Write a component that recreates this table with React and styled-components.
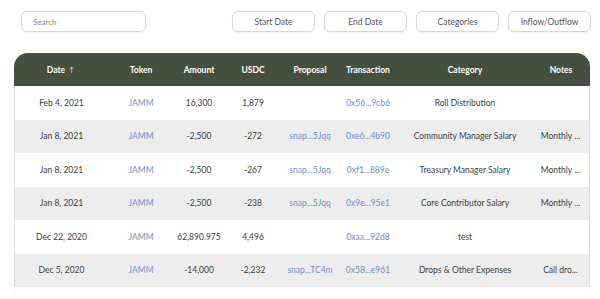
import React from 'react'
import styled, { createGlobalStyle } from 'styled-components'

const GlobalStyle = createGlobalStyle`
  body {
    margin: 0;
    background: #ffffff;
    font-family: Lato, "Open Sans", sans-serif;
  }
`

const columns = [
  { key: 'date', label: 'Date', width: 94 },
  { key: 'token', label: 'Token', width: 66 },
  { key: 'amount', label: 'Amount', width: 50 },
  { key: 'usdc', label: 'USDC', width: 58 },
  { key: 'proposal', label: 'Proposal', width: 56 },
  { key: 'tx', label: 'Transaction', width: 60 },
  { key: 'category', label: 'Category', width: 134 },
  { key: 'notes', label: 'Notes', width: 58 },
]

const rows = [
  { date: 'Feb 4, 2021', amount: '16,300', usdc: '1,879', proposal: '', tx: '0x56...9cb6', category: 'Roll Distribution', notes: '' },
  { date: 'Jan 8, 2021', amount: '-2,500', usdc: '-272', proposal: 'snap...5Jqq', tx: '0xe6...4b90', category: 'Community Manager Salary', notes: 'Monthly ...' },
  { date: 'Jan 8, 2021', amount: '-2,500', usdc: '-267', proposal: 'snap...5Jqq', tx: '0xf1...889e', category: 'Treasury Manager Salary', notes: 'Monthly ...' },
  { date: 'Jan 8, 2021', amount: '-2,500', usdc: '-238', proposal: 'snap...5Jqq', tx: '0x9e...95e1', category: 'Core Contributor Salary', notes: 'Monthly ...' },
  { date: 'Dec 22, 2020', amount: '62,890.975', usdc: '4,496', proposal: '', tx: '0xaa...92d8', category: 'test', notes: '' },
  { date: 'Dec 5, 2020', amount: '-14,000', usdc: '-2,232', proposal: 'snap...TC4m', tx: '0x58...e961', category: 'Drops & Other Expenses', notes: 'Call dro...' },
  { date: 'Nov 30, 2020', amount: '-5,000', usdc: '-812', proposal: 'snap...8Kpw', tx: '0x3d...a7c2', category: 'Contributor Rewards', notes: 'Paid to ...', faded: true },
]

const filters = ['Start Date', 'End Date', 'Categories', 'Inflow/Outflow']

export default function App() {
  return (
    <Page>
      <GlobalStyle />
      <Toolbar>
        <SearchInput placeholder="Search" />
        <FilterGroup>
          {filters.map((f) => (
            <FilterButton key={f}>{f}</FilterButton>
          ))}
        </FilterGroup>
      </Toolbar>
      <Table>
        <colgroup>
          {columns.map((c) => (
            <col key={c.key} style={{ width: c.width }} />
          ))}
        </colgroup>
        <thead>
          <tr>
            {columns.map((c) => (
              <HeadCell key={c.key}>
                {c.label}
                {c.key === 'date' && <SortArrow>↑</SortArrow>}
              </HeadCell>
            ))}
          </tr>
        </thead>
        <tbody>
          {rows.map((r, i) => (
            <Row key={i} $striped={i % 2 === 1} $faded={r.faded}>
              <Cell>{r.date}</Cell>
              <Cell $link>JAMM</Cell>
              <Cell>{r.amount}</Cell>
              <Cell>{r.usdc}</Cell>
              <Cell $link>{r.proposal}</Cell>
              <Cell $link>{r.tx}</Cell>
              <Cell>{r.category}</Cell>
              <Cell>{r.notes}</Cell>
            </Row>
          ))}
        </tbody>
      </Table>
    </Page>
  )
}

const Page = styled.div`
  width: 600px;
  height: 299px;
  overflow: hidden;
  padding: 11px 9px 0 14px;
  box-sizing: border-box;
`

const Toolbar = styled.div`
  display: flex;
  justify-content: space-between;
  align-items: center;
  padding-left: 7px;
  margin-bottom: 21px;
`

const SearchInput = styled.input`
  width: 125px;
  height: 21px;
  box-sizing: border-box;
  border: 1px solid #d6d6d6;
  border-radius: 6px;
  padding: 0 11px;
  font-family: Lato, sans-serif;
  font-size: 8px;
  color: #444;
  outline: none;
  box-shadow: 0 1px 2px rgba(0, 0, 0, 0.06);

  &::placeholder {
    color: #8a8a8a;
  }
`

const FilterGroup = styled.div`
  display: flex;
  gap: 9px;
`

const FilterButton = styled.button`
  width: 83px;
  height: 21px;
  box-sizing: border-box;
  background: #ffffff;
  border: 1px solid #d6d6d6;
  border-radius: 6px;
  font-family: Lato, sans-serif;
  font-size: 8.5px;
  color: #555;
  box-shadow: 0 1px 2px rgba(0, 0, 0, 0.06);
  padding: 0;
`

const Table = styled.table`
  width: 576px;
  table-layout: fixed;
  border-collapse: separate;
  border-spacing: 0;
  font-size: 8.5px;

  tbody td:first-child {
    border-left: 1px solid #dedede;
  }
  tbody td:last-child {
    border-right: 1px solid #dedede;
  }
`

const HeadCell = styled.th`
  height: 33px;
  padding: 0;
  background: #444f3e;
  color: #ffffff;
  font-weight: 700;
  font-size: 8.5px;
  text-align: center;

  &:first-child {
    border-top-left-radius: 14px;
  }
  &:last-child {
    border-top-right-radius: 14px;
  }
`

const SortArrow = styled.span`
  color: #c9cdc5;
  font-family: "DejaVu Sans", sans-serif;
  font-weight: 400;
  margin-left: 3px;
`

const Row = styled.tr`
  background: ${(p) => (p.$striped ? '#ededed' : '#ffffff')};
  opacity: ${(p) => (p.$faded ? 0.12 : 1)};
`

const Cell = styled.td`
  height: 33.5px;
  padding: 0 2px;
  text-align: center;
  white-space: nowrap;
  overflow: hidden;
  color: ${(p) => (p.$link ? '#6d90c9' : '#404040')};
`
